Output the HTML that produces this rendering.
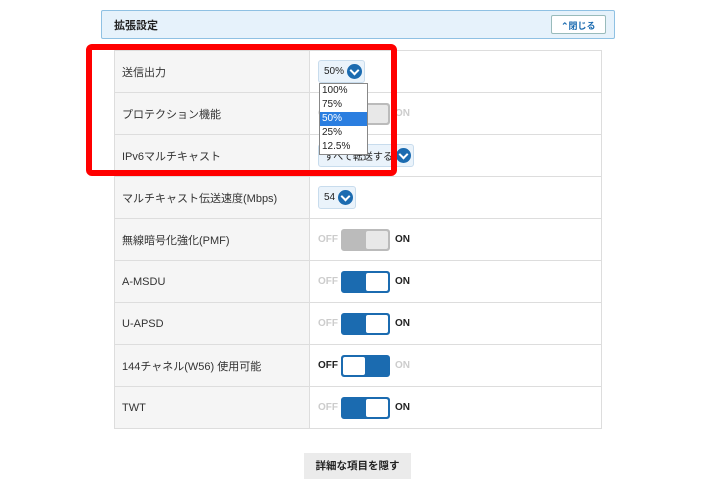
<!DOCTYPE html>
<html><head><meta charset="utf-8"><style>
*{box-sizing:border-box;margin:0;padding:0}
body{width:715px;height:477px;background:#fff;font-family:"Liberation Sans","Noto Sans CJK JP",sans-serif;position:relative;overflow:hidden;color:#333}
.hdr{position:absolute;left:101px;top:10px;width:514px;height:29px;background:#e6f2fb;border:1px solid #8fc1e3;border-radius:2px}
.hdr b{position:absolute;left:12px;top:6px;font-size:11px;color:#222}
.close{position:absolute;right:8px;top:4px;width:55px;height:19px;background:#fff;border:1px solid #9bb;border-radius:2px;font-size:9px;color:#1b6bb0;padding:3px 0 0 9px;font-weight:bold}
table{position:absolute;left:114px;top:50px;width:488px;border-collapse:collapse}
td{height:42px;border:1px solid #ddd;font-size:11px;vertical-align:middle}
td.l{width:195px;background:#f5f5f5;padding-left:7px;color:#333}
td.r{background:#fff;padding-left:8px;position:relative}
.tg{display:flex;align-items:center;font-size:10px;font-weight:bold}
.off{color:#ccc;width:23px}
.sw{width:49px;height:22px;border:2px solid #1b6bb0;border-radius:3px;background:#1b6bb0;position:relative;margin-right:5px}
.sw i{position:absolute;top:0;bottom:0;width:22px;background:#fff;border-radius:2px}
.on{color:#222}
.sel{display:inline-flex;align-items:center;height:23px;padding:0 2px 0 5px;background:#eaf3fb;border:1px solid #c8dced;border-radius:3px;font-size:10px;color:#222}
.arr{width:15px;height:15px;border-radius:50%;background:#1b6bb0;margin-left:3px;position:relative}
.arr:after{content:"";position:absolute;left:4px;top:3px;width:5px;height:5px;border-right:2px solid #fff;border-bottom:2px solid #fff;transform:rotate(45deg)}
.dd{position:absolute;left:319px;top:83px;width:49px;height:72px;background:#fff;border:1px solid #888;font-size:10px;color:#222;z-index:3}
.dd div{height:14px;line-height:14px;padding-left:2px}
.dd .h{background:#2a7ee0;color:#fff}
.red{position:absolute;left:86px;top:44px;width:311px;height:132px;border:6px solid #f00;border-radius:6px;z-index:4}
.btn{position:absolute;left:304px;top:453px;width:107px;height:26px;background:#ebebeb;font-size:10.5px;font-weight:bold;text-align:center;line-height:26px;color:#222}
</style></head><body>
<div class="hdr"><b>拡張設定</b><div class="close">⌃閉じる</div></div>
<table>
<tr><td class="l">送信出力</td><td class="r"><span class="sel">50%<span class="arr"></span></span></td></tr>
<tr><td class="l">プロテクション機能</td><td class="r"><div class="tg"><span class="off">OFF</span><div class="sw" style="background:#bbb;border-color:#bbb"><i style="right:0;background:#e8e8e8"></i></div><span class="off">ON</span></div></td></tr>
<tr><td class="l">IPv6マルチキャスト</td><td class="r"><span class="sel">すべて転送する<span class="arr"></span></span></td></tr>
<tr><td class="l">マルチキャスト伝送速度(Mbps)</td><td class="r"><span class="sel">54<span class="arr"></span></span></td></tr>
<tr><td class="l">無線暗号化強化(PMF)</td><td class="r"><div class="tg"><span class="off">OFF</span><div class="sw" style="background:#bbb;border-color:#bbb"><i style="right:0;background:#e8e8e8"></i></div><span class="on">ON</span></div></td></tr>
<tr><td class="l">A-MSDU</td><td class="r"><div class="tg"><span class="off">OFF</span><div class="sw"><i style="right:0"></i></div><span class="on">ON</span></div></td></tr>
<tr><td class="l">U-APSD</td><td class="r"><div class="tg"><span class="off">OFF</span><div class="sw"><i style="right:0"></i></div><span class="on">ON</span></div></td></tr>
<tr><td class="l">144チャネル(W56) 使用可能</td><td class="r"><div class="tg"><span class="on" style="width:23px">OFF</span><div class="sw"><i style="left:0"></i></div><span class="off">ON</span></div></td></tr>
<tr><td class="l">TWT</td><td class="r"><div class="tg"><span class="off">OFF</span><div class="sw"><i style="right:0"></i></div><span class="on">ON</span></div></td></tr>
</table>
<div class="dd"><div>100%</div><div>75%</div><div class="h">50%</div><div>25%</div><div>12.5%</div></div>
<div class="red"></div>
<div class="btn">詳細な項目を隠す</div>
</body></html>
